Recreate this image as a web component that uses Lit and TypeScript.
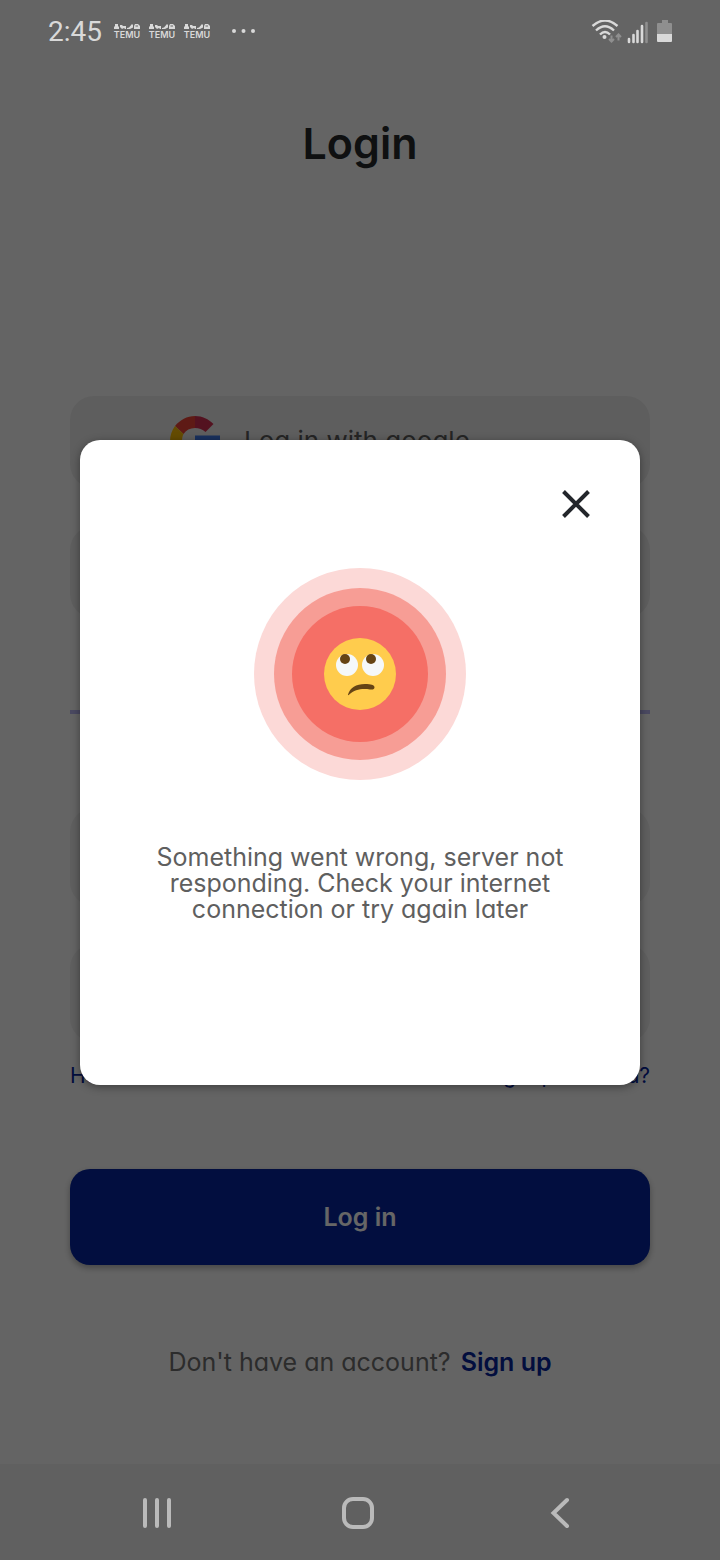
import { LitElement, html, svg, css } from "lit";
import { customElement, state } from "lit/decorators.js";

const temuArt = svg`
  <path d="M2 0h3v2l1 1v2H1V3l1-1z"/>
  <path d="M7 1h2l1 1h3v3h-1l-1-1-2 1-2-2z"/>
  <path d="M14 4l2-.5 3-3.500 1 1v2.500l-3 1.500h-3z"/>
  <path d="M21 2l1-2h3l2 2v3h-6zM22.500 2.500h2.500v-1h-2.500z" fill-rule="evenodd"/>`;

@customElement("status-bar")
export class StatusBar extends LitElement {
  static styles = css`
    :host {
      display: flex;
      align-items: center;
      justify-content: space-between;
      height: 60px;
      padding: 3px 47px 0 48px;
      box-sizing: border-box;
      color: #d9d9d9;
      font-family: Roboto, sans-serif;
    }
    .group { display: flex; align-items: center; }
    .time { font-size: 28px; line-height: 36px; margin-right: 11px; }
    .temu {
      display: flex;
      flex-direction: column;
      align-items: center;
      width: 28px;
      margin-right: 7px;
      font: 600 9px/9px Inter, sans-serif;
    }
    .temu svg { display: block; }
    .dots { margin-left: 14px; }
    svg { display: block; fill: currentColor; }
  `;

  render() {
    return html`
      <div class="group">
        <span class="time">2:45</span>
        ${[0, 1, 2].map(
          () => html`<span class="temu">
            <svg width="28" height="6" viewBox="0 0 28 6" aria-hidden="true">${temuArt}</svg>TEMU
          </span>`
        )}
        <svg class="dots" width="24" height="6" viewBox="0 0 24 6" aria-hidden="true">
          <circle cx="2" cy="2" r="2" /><circle cx="11.500" cy="2" r="2" /><circle cx="21" cy="2" r="2" />
        </svg>
      </div>
      <svg width="82" height="24" viewBox="0 0 82 24" aria-hidden="true">
        <g fill="none" stroke="#d9d9d9" stroke-width="2.400">
          <path d="M1.500 6Q14-5 26.500 6" />
          <path d="M5 10.500Q14 2 23 10.500" />
          <path d="M9 14.500Q14 9.500 19 14.500" />
        </g>
        <circle cx="13.500" cy="17" r="2" />
        <path d="M20.500 15.500v6M18 19l2.500 2.500L23 19M27.500 20.500v-6M25 17l2.500-2.500L30 17" fill="none" stroke="#8f8f8f" stroke-width="2" />
        <path d="M38 19v3M42.500 15v7M46.500 11v11M51 6v16" fill="none" stroke="#d9d9d9" stroke-width="2.600" stroke-linecap="round" />
        <path d="M55.500 3v19" stroke="#8f8f8f" stroke-width="2.600" stroke-linecap="round" />
        <path d="M66 4q0-1 1-1h4V0h6v3h3q1 0 1 1v10H66z" fill="#8f8f8f" />
        <path d="M66 14h15v7q0 1-1 1H67q-1 0-1-1z" />
      </svg>
    `;
  }
}

@customElement("nav-bar")
export class NavBar extends LitElement {
  static styles = css`
    :host {
      display: flex;
      align-items: center;
      justify-content: space-around;
      height: 96px;
      padding: 2px 60px 0 56px;
      box-sizing: border-box;
      background: #606060;
    }
    button {
      display: flex;
      padding: 0;
      border: 0;
      background: none;
    }
    svg {
      display: block;
      fill: none;
      stroke: #bababa;
      stroke-width: 4;
      stroke-linecap: round;
    }
  `;

  render() {
    return html`
      <button type="button" aria-label="Recent apps">
        <svg width="32" height="32" viewBox="0 0 32 32"><path d="M4 3v26M16 3v26M28 3v26" /></svg>
      </button>
      <button type="button" aria-label="Home">
        <svg width="32" height="32" viewBox="0 0 32 32"><rect x="2" y="2" width="28" height="28" rx="9" /></svg>
      </button>
      <button type="button" aria-label="Back">
        <svg width="32" height="32" viewBox="0 0 32 32"><path d="M24 3L10.500 16 24 29" /></svg>
      </button>
    `;
  }
}

@customElement("error-dialog")
export class ErrorDialog extends LitElement {
  static styles = css`
    :host {
      display: flex;
      flex-direction: column;
      align-items: center;
      flex: 1;
      padding: 40px 40px 163px;
      box-sizing: border-box;
      border-radius: 20px;
      background: #fff;
      box-shadow: 0 2px 8px rgba(0, 0, 0, 0.4);
    }
    .close {
      align-self: flex-end;
      display: flex;
      padding: 10px;
      border: 0;
      background: none;
    }
    svg { display: block; }
    .art { margin-top: 40px; }
    .message {
      margin: 64px 0 0;
      max-width: 430px;
      color: #5f5f5f;
      font-size: 25px;
      line-height: 26px;
      text-align: center;
    }
  `;

  private close() {
    this.dispatchEvent(new CustomEvent("dismiss"));
  }

  render() {
    return html`
      <button class="close" type="button" aria-label="Close" @click=${this.close}>
        <svg width="28" height="28" viewBox="0 0 28 28">
          <path d="M1.500 1.500l25 25M26.500 1.500l-25 25" stroke="#23262b" stroke-width="4" />
        </svg>
      </button>
      <svg class="art" width="212" height="212" viewBox="0 0 212 212" aria-hidden="true">
        <circle cx="106" cy="106" r="106" fill="#fcd9d7" />
        <circle cx="106" cy="106" r="86" fill="#f79d95" />
        <circle cx="106" cy="106" r="68" fill="#f56f66" />
        <circle cx="106" cy="106" r="36" fill="#ffcc4d" />
        <circle cx="93" cy="97" r="11" fill="#f5f8fa" />
        <circle cx="119" cy="97" r="11" fill="#f5f8fa" />
        <circle cx="91" cy="91" r="5" fill="#664415" />
        <circle cx="117" cy="91" r="5" fill="#664415" />
        <path d="M94 126.500C96 120 102 116 111 116c6 0 9.500 1 9.500 3.200 0 2-1.500 2.500-4.500 2.200-9-1-15 0-21 5.400-.6.600-1.300.4-1-.3z" fill="#664415" />
      </svg>
      <p class="message">Something went wrong, server not responding. Check your internet connection or try again later</p>
    `;
  }
}

@customElement("app-root")
export class AppRoot extends LitElement {
  static styles = css`
    :host {
      display: block;
      position: relative;
      min-height: 100vh;
      background: #fafafa;
      font-family: Inter, sans-serif;
      font-feature-settings: "cv11";
    }
    button, input {
      font-family: inherit;
      font-size: 25px;
      line-height: 32px;
      font-feature-settings: inherit;
    }
    .page {
      display: flex;
      flex-direction: column;
      min-height: 100vh;
      padding: 115px 70px 96px;
      box-sizing: border-box;
    }
    h1 {
      margin: 0;
      color: #262a2c;
      font-size: 43px;
      line-height: 56px;
      font-weight: 600;
      text-align: center;
    }
    .fields { display: flex; flex-direction: column; gap: 38px; }
    .social { margin-top: 225px; }
    .provider {
      display: flex;
      align-items: center;
      gap: 24px;
      height: 92px;
      padding: 0 100px 2px;
      border: 0;
      border-radius: 24px;
      background: #ebebeb;
      color: #5e5e5e;
      font-size: 26px;
    }
    .rule {
      width: 100%;
      height: 4px;
      margin: 92px 0 94px;
      border: 0;
      background: #bab6f2;
    }
    .field {
      width: 100%;
      height: 98px;
      padding: 0 32px;
      box-sizing: border-box;
      border: 0;
      border-radius: 24px;
      background: #ededed;
    }
    .help {
      display: flex;
      justify-content: space-between;
      margin-top: 20px;
      font-size: 21px;
      line-height: 28px;
    }
    a { color: #05239b; text-decoration: none; }
    .submit {
      height: 96px;
      margin-top: 79px;
      border: 0;
      border-radius: 20px;
      background: #05259f;
      box-shadow: 0 3px 6px rgba(0, 0, 0, 0.3);
      color: #fff;
      font-weight: 600;
    }
    .signup {
      margin: 81px 0 0;
      color: #6e6e6e;
      font-size: 25px;
      line-height: 32px;
      text-align: center;
    }
    .signup a { margin-left: 3px; font-weight: 600; }
    .overlay {
      position: absolute;
      inset: 0;
      display: flex;
      flex-direction: column;
      background: rgba(0, 0, 0, 0.6);
    }
    .stage {
      flex: 1;
      display: flex;
      align-items: center;
      padding: 0 80px;
    }
  `;

  @state() private failed = true;

  render() {
    return html`
      <main class="page">
        <h1>Login</h1>
        <div class="fields social">
          <button class="provider" type="button">
            <svg width="50" height="50" viewBox="0 0 50 50" aria-hidden="true">
              <path d="M25 0v12c-5 0-9 2-11.500 6L5 10C10 4 17 0 25 0z" fill="#ea4335" />
              <path d="M25 0c7.500 0 13.500 3 18.500 8L35.500 16C32.500 13.500 29 12 25 12z" fill="#d02f50" />
              <path d="M5 10l8.500 8c-2 4-2 10 0 14L5 40C-1.600 31-1.600 19 5 10z" fill="#fbbc05" />
              <path d="M5 40l8.500-8c5 7 14 8 20 4l8.500 7C32 53 13 52 5 40z" fill="#34a853" />
              <path d="M25 19.500h25c1 10-2 18-8 23.500L33.500 36c2.500-1.500 4-3.500 4.500-6H25z" fill="#3f78e8" />
            </svg>
            Log in with google
          </button>
          <button class="provider" type="button" aria-label="Other sign-in option"></button>
        </div>
        <hr class="rule" />
        <div class="fields">
          <input class="field" type="email" aria-label="Email" />
          <input class="field" type="password" aria-label="Password" />
        </div>
        <div class="help">
          <a href="#help">Have an issue?</a>
          <a href="#forgot">Forgot password?</a>
        </div>
        <button class="submit" type="button">Log in</button>
        <p class="signup">Don't have an account? <a href="#signup">Sign up</a></p>
      </main>
      <div class="overlay">
        <status-bar></status-bar>
        <div class="stage">
          ${this.failed
            ? html`<error-dialog role="dialog" aria-modal="true" @dismiss=${() => (this.failed = false)}></error-dialog>`
            : null}
        </div>
        <nav-bar></nav-bar>
      </div>
    `;
  }
}
